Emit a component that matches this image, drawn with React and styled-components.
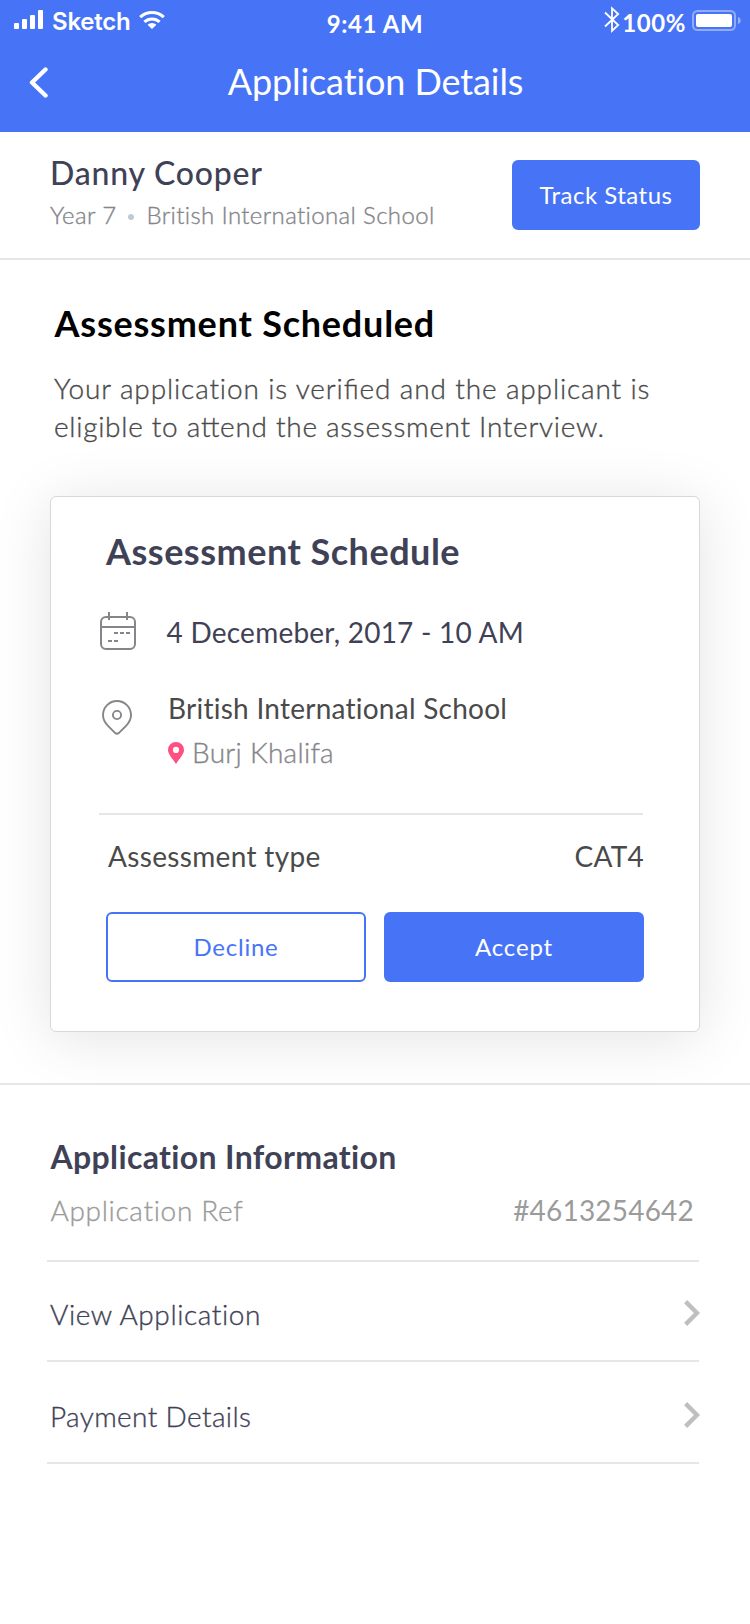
import React from 'react';
import styled, { createGlobalStyle } from 'styled-components';

const BLUE = '#4774f7';
const INK = '#3f4256';
const LINE = '#e6e6e6';

const GlobalStyle = createGlobalStyle`
  *, *::before, *::after { box-sizing: border-box; }
  body {
    margin: 0;
    background: #fff;
    font-family: Lato, "Open Sans", sans-serif;
  }
  h1, h2, h3, p { margin: 0; }
  button { font-family: inherit; cursor: pointer; }
  svg { display: block; flex: none; }
`;

const Screen = styled.div`
  width: 750px;
  min-height: 1624px;
  background: #fff;
`;

const Header = styled.header`
  height: 132px;
  background: ${BLUE};
  color: #fff;
`;

const StatusBar = styled.div`
  display: grid;
  grid-template-columns: 1fr auto 1fr;
  align-items: start;
  height: 44px;
  padding: 6px 9px 0 14px;
`;

const Carrier = styled.div`
  display: flex;
  align-items: flex-start;
  font: 600 24px/30px Inter, "Liberation Sans", sans-serif;
  letter-spacing: -0.23px;

  span { margin-top: 1px; }
  svg:first-child { margin: 4px 8px 0 0; }
  svg:last-child { margin: 4px 0 0 9px; }
`;

const Clock = styled.div`
  font-size: 24px;
  line-height: 30px;
  font-weight: 700;
  letter-spacing: 0.6px;
  padding: 3px 5px 0 0;
`;

const Power = styled.div`
  display: flex;
  justify-content: flex-end;
  align-items: flex-start;
  font-size: 24px;
  line-height: 30px;
  font-weight: 700;
  letter-spacing: 0.58px;

  span { margin: 2px 6px 0 2px; }
  svg:last-child { margin-top: 4px; }
`;

const NavBar = styled.div`
  display: grid;
  grid-template-columns: 60px 1fr 60px;
  align-items: start;
  height: 88px;
  padding-top: 15px;
`;

const BackButton = styled.button`
  border: 0;
  padding: 8px 0 0 27px;
  background: none;
`;

const Title = styled.h1`
  padding-left: 1px;
  font-size: 36px;
  line-height: 44px;
  font-weight: 400;
  letter-spacing: -0.1px;
  text-align: center;
`;

const Applicant = styled.section`
  display: flex;
  justify-content: space-between;
  align-items: flex-start;
  height: 128px;
  padding: 20px 50px 0;
  border-bottom: 2px solid ${LINE};
`;

const Name = styled.h2`
  margin-top: 1px;
  font-size: 32px;
  line-height: 40px;
  font-weight: 500;
  letter-spacing: 0.78px;
  color: ${INK};
`;

const Meta = styled.div`
  display: flex;
  align-items: center;
  margin-top: 7px;
  font-size: 24px;
  line-height: 30px;
  font-weight: 300;
  letter-spacing: 0.36px;
  color: #85858a;
  -webkit-text-stroke: 0.35px;
`;

const Dot = styled.i`
  width: 6px;
  height: 6px;
  margin: 4px 12px 0 12px;
  border-radius: 50%;
  background: #bfcbd0;
`;

const Button = styled.button`
  width: ${(p) => p.$width}px;
  height: 70px;
  padding: 0;
  border: 2px solid ${BLUE};
  border-radius: 6px;
  background: ${(p) => (p.$outline ? '#fff' : BLUE)};
  color: ${(p) => (p.$outline ? BLUE : '#fff')};
  font-size: 24px;
  line-height: 30px;
  font-weight: 400;
  letter-spacing: ${(p) => p.$track}px;
`;

const Assessment = styled.section`
  height: 825px;
  padding: 41px 50px 0;
  border-bottom: 2px solid ${LINE};
  overflow: hidden;
`;

const Heading = styled.h2`
  margin-left: 4.5px;
  font-size: 36px;
  line-height: 44px;
  font-weight: 700;
  letter-spacing: 0.78px;
  color: #000;
`;

const Message = styled.p`
  display: flex;
  flex-direction: column;
  margin: 24px 0 0 4px;
  font-size: 28px;
  line-height: 38px;
  font-weight: 300;
  color: #4a4a4a;
  white-space: nowrap;
  -webkit-text-stroke: 0.35px;
`;

const MessageLine = styled.span`
  letter-spacing: ${(p) => p.$track}px;
`;

const Ligature = styled.span`
  font-feature-settings: "liga" 1;
`;

const Card = styled.article`
  height: 536px;
  margin-top: 51px;
  padding: 32px 55px 0 48px;
  border: 1px solid #d8d8d8;
  border-radius: 6px;
  background: #fff;
  box-shadow: 0 6px 60px rgba(0, 0, 0, 0.115);
`;

const CardTitle = styled.h3`
  margin-left: 7px;
  font-size: 36px;
  line-height: 44px;
  font-weight: 700;
  letter-spacing: 0.5px;
  color: ${INK};
`;

const Detail = styled.div`
  display: flex;
  align-items: flex-start;
  margin-top: ${(p) => p.$gap}px;
`;

const IconCell = styled.div`
  flex: none;
  width: ${(p) => p.$width}px;
  padding: ${(p) => p.$pad};
`;

const Label = styled.div`
  font-size: 28px;
  line-height: 38px;
  font-weight: ${(p) => p.$weight || 400};
  letter-spacing: ${(p) => p.$track}px;
  color: ${(p) => p.$color};
  white-space: nowrap;
  -webkit-text-stroke: ${(p) => (p.$weight === 300 ? '0.35px' : 0)};
`;

const Place = styled.div`
  display: flex;
  align-items: flex-start;
  gap: 8px;
  margin-top: 6px;

  svg { margin-top: 9px; }
`;

const Spread = styled.div`
  display: flex;
  justify-content: space-between;
  padding: ${(p) => p.$pad};
`;

const Divider = styled.hr`
  height: 2px;
  margin: 42px 1px 0 0;
  border: 0;
  background: ${LINE};
`;

const Actions = styled.div`
  display: flex;
  gap: 18px;
  margin: 37px 0 0 7px;
`;

const Info = styled.section`
  padding: 52px 51px 0 47px;
`;

const InfoTitle = styled.h2`
  margin-left: 3.5px;
  font-size: 32px;
  line-height: 40px;
  font-weight: 700;
  letter-spacing: 0.36px;
  color: ${INK};
`;

const InfoRow = styled.div`
  display: flex;
  justify-content: space-between;
  align-items: flex-start;
  height: ${(p) => p.$height}px;
  padding: ${(p) => p.$pad};
  border-bottom: 2px solid ${LINE};
`;

function Signal() {
  return (
    <svg width="30" height="20" viewBox="0 0 30 20" fill="#fff">
      <rect x="0" y="13" width="5" height="6" rx="1" />
      <rect x="8" y="9" width="5" height="10" rx="1" />
      <rect x="16" y="5" width="5" height="14" rx="1" />
      <rect x="24" y="0" width="5" height="19" rx="1" />
    </svg>
  );
}

function Wifi() {
  return (
    <svg width="26" height="20" viewBox="0 0 26 20" fill="none" stroke="#fff" strokeWidth="3">
      <path d="M1.2 7.1a17.2 17.2 0 0 1 23.6 0" />
      <path d="M5.4 11.9a11.2 11.2 0 0 1 15.2 0" />
      <path d="M13 19l-4.4-4.2a6.6 6.6 0 0 1 8.8 0z" fill="#fff" stroke="none" />
    </svg>
  );
}

function Bluetooth() {
  return (
    <svg width="16" height="28" viewBox="0 0 16 28" fill="none" stroke="#fff" strokeWidth="1.8">
      <path d="M1 6.500l13.200 12.500L8 25V2.400L14.200 8 1 20.500" />
    </svg>
  );
}

function Battery() {
  return (
    <svg width="49" height="21" viewBox="0 0 49 21">
      <rect x="1" y="1" width="42" height="19" rx="4.5" fill="none" stroke="#fff" strokeOpacity="0.4" strokeWidth="2" />
      <rect x="4" y="4" width="36" height="13" rx="2" fill="#fff" />
      <path d="M46 7c3.6 1 3.6 6 0 7z" fill="#fff" fillOpacity="0.45" />
    </svg>
  );
}

function Back() {
  return (
    <svg width="22" height="32" viewBox="0 0 22 32" fill="none" stroke="#fff" strokeWidth="4.4" strokeLinecap="round" strokeLinejoin="round">
      <path d="M18.500 2.500L5 15.500 18.500 28.500" />
    </svg>
  );
}

function Calendar() {
  return (
    <svg width="36" height="38" viewBox="0 0 36 38" fill="none" stroke="#85858a" strokeWidth="2">
      <rect x="1" y="5" width="34" height="32" rx="5" />
      <path d="M1 15h34M9 0v8M27 0v8" />
      <path d="M14 21h4M20 21h4M26 21h4M8 29h4M14 29h4" />
    </svg>
  );
}

function Pin() {
  return (
    <svg width="30" height="35" viewBox="0 0 30 35" fill="none" stroke="#85858a" strokeWidth="1.9">
      <path d="M15 1a14 14 0 0 1 14 14c0 4.6-2 7.8-5 10.8l-7 7a2.9 2.9 0 0 1-4 0l-7-7C3 22.8 1 19.6 1 15A14 14 0 0 1 15 1z" />
      <circle cx="15" cy="15" r="4.1" />
    </svg>
  );
}

function PlacePin() {
  return (
    <svg width="16" height="22" viewBox="0 0 16 22" fill="#ff4f81" fillRule="evenodd">
      <path d="M8 0a8 8 0 0 1 8 8c0 4-4 8-8 14C4 16 0 12 0 8a8 8 0 0 1 8-8zm0 4.800a3.100 3.100 0 1 0 0 6.200 3.100 3.100 0 0 0 0-6.200z" />
    </svg>
  );
}

function Chevron() {
  return (
    <svg width="16" height="26" viewBox="0 0 16 26" fill="none" stroke="#bfbfbf" strokeWidth="4.4">
      <path d="M1.6 1.6L13 13 1.6 24.4" />
    </svg>
  );
}

export default function App() {
  return (
    <Screen>
      <GlobalStyle />
      <Header>
        <StatusBar>
          <Carrier><Signal /><span>Sketch</span><Wifi /></Carrier>
          <Clock>9:41 AM</Clock>
          <Power><Bluetooth /><span>100%</span><Battery /></Power>
        </StatusBar>
        <NavBar>
          <BackButton aria-label="Back"><Back /></BackButton>
          <Title>Application Details</Title>
        </NavBar>
      </Header>

      <Applicant>
        <div>
          <Name>Danny Cooper</Name>
          <Meta>Year 7<Dot />British International School</Meta>
        </div>
        <Spread $pad="8px 0 0">
          <Button $width={188} $track={0.49}>Track Status</Button>
        </Spread>
      </Applicant>

      <Assessment>
        <Heading>Assessment Scheduled</Heading>
        <Message>
          <MessageLine $track={0.86}>
            Your application is veri<Ligature>fi</Ligature>ed and the applicant is
          </MessageLine>
          <MessageLine $track={0.71}>
            eligible to a<Ligature>tt</Ligature>end the assessment Interview.
          </MessageLine>
        </Message>
        <Card>
          <CardTitle>Assessment Schedule</CardTitle>
          <Detail $gap={39}>
            <IconCell $width={67.5} $pad="0 0 0 1px"><Calendar /></IconCell>
            <IconCell $pad="1px 0 0">
              <Label $color={INK} $track={0.24}>4 Decemeber, 2017 - 10 AM</Label>
            </IconCell>
          </Detail>
          <Detail $gap={38}>
            <IconCell $width={69} $pad="11px 0 0 3px"><Pin /></IconCell>
            <div>
              <Label $color="#4a4a4a" $track={0.25}>British International School</Label>
              <Place>
                <PlacePin />
                <Label $color="#85858a" $weight={300} $track={0.28}>Burj Khalifa</Label>
              </Place>
            </div>
          </Detail>
          <Divider />
          <Spread $pad="22px 0 0 9px">
            <Label $color="#4a4a4a" $track={0.33}>Assessment type</Label>
            <Label $color="#4a4a4a" $track={0.26}>CAT4</Label>
          </Spread>
          <Actions>
            <Button $outline $width={260} $track={0.75}>Decline</Button>
            <Button $width={260} $track={0.82}>Accept</Button>
          </Actions>
        </Card>
      </Assessment>

      <Info>
        <InfoTitle>Application Information</InfoTitle>
        <InfoRow $height={85} $pad="14px 5px 0 3.5px">
          <Label $color="#9b9b9b" $weight={300} $track={0.68}>Application Ref</Label>
          <Label $color="#9b9b9b" $track={0.2}>#4613254642</Label>
        </InfoRow>
        <InfoRow $height={100} $pad="33px 0 0 3px">
          <Label $color={INK} $weight={300} $track={0.58}>View Application</Label>
          <IconCell $width={16} $pad="5px 0 0 1px"><Chevron /></IconCell>
        </InfoRow>
        <InfoRow $height={102} $pad="35px 0 0 3px">
          <Label $color={INK} $weight={300} $track={0.37}>Payment Details</Label>
          <IconCell $width={16} $pad="5px 0 0 1px"><Chevron /></IconCell>
        </InfoRow>
      </Info>
    </Screen>
  );
}
